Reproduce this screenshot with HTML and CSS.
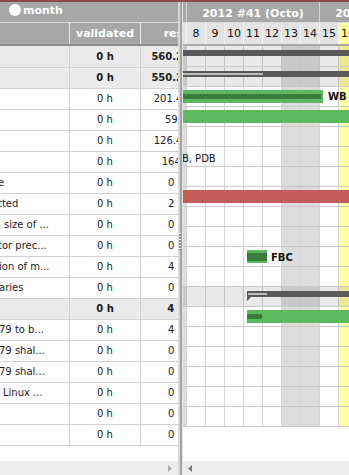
FILE: index.html
```html
<!DOCTYPE html>
<html>
<head>
<meta charset="utf-8">
<link rel="stylesheet" href="styles.css">
</head>
<body>
<div class="app">
  <div class="topline"></div>
  <div class="main">
    <div class="left">
      <div class="hdr1 lh1"><span class="radio"></span><span class="hlabel">month</span></div>
      <div class="hdr2 lh2"><div class="c1"></div><div class="c2">validated</div><div class="c3">rest</div></div>
      <div class="lbody">
        <div class="lrow sum first"><div class="c1"></div><div class="c2">0 h</div><div class="c3">560.25 h</div></div>
        <div class="lrow sum"><div class="c1"></div><div class="c2">0 h</div><div class="c3">550.25 h</div></div>
        <div class="lrow"><div class="c1"></div><div class="c2">0 h</div><div class="c3">201.45 h</div></div>
        <div class="lrow"><div class="c1"></div><div class="c2">0 h</div><div class="c3">59 h</div></div>
        <div class="lrow"><div class="c1"></div><div class="c2">0 h</div><div class="c3">126.45 h</div></div>
        <div class="lrow"><div class="c1"></div><div class="c2">0 h</div><div class="c3">164 h</div></div>
        <div class="lrow"><div class="c1"><span class="nm o-m2">e</span></div><div class="c2">0 h</div><div class="c3">0 h</div></div>
        <div class="lrow"><div class="c1"><span class="nm o-m2">tted</span></div><div class="c2">0 h</div><div class="c3">2 h</div></div>
        <div class="lrow"><div class="c1"><span class="nm o-4">size of ...</span></div><div class="c2">0 h</div><div class="c3">0 h</div></div>
        <div class="lrow"><div class="c1"><span class="nm o-m2">tor prec...</span></div><div class="c2">0 h</div><div class="c3">0 h</div></div>
        <div class="lrow"><div class="c1"><span class="nm o-m1">ion of m...</span></div><div class="c2">0 h</div><div class="c3">4 h</div></div>
        <div class="lrow"><div class="c1"><span class="nm o-m1">aries</span></div><div class="c2">0 h</div><div class="c3">0 h</div></div>
        <div class="lrow sum"><div class="c1"></div><div class="c2">0 h</div><div class="c3">4 h</div></div>
        <div class="lrow"><div class="c1"><span class="nm o-m1">79 to b...</span></div><div class="c2">0 h</div><div class="c3">4 h</div></div>
        <div class="lrow"><div class="c1"><span class="nm o-m1">79 shal...</span></div><div class="c2">0 h</div><div class="c3">0 h</div></div>
        <div class="lrow"><div class="c1"><span class="nm o-m1">79 shal...</span></div><div class="c2">0 h</div><div class="c3">0 h</div></div>
        <div class="lrow"><div class="c1"><span class="nm o-3">Linux ...</span></div><div class="c2">0 h</div><div class="c3">0 h</div></div>
        <div class="lrow"><div class="c1"></div><div class="c2">0 h</div><div class="c3">0 h</div></div>
        <div class="lrow"><div class="c1"></div><div class="c2">0 h</div><div class="c3">0 h</div></div>
      </div>
      <div class="fill"></div>
      <div class="hscroll lscroll"><svg width="4" height="7" viewBox="0 0 4 7"><polygon points="0,0 4,3.5 0,7" fill="#ababab"/></svg></div>
    </div>
    <div class="splitter"><div class="grip"></div></div>
    <div class="right">
      <div class="hdr1 weeks">
        <div class="wk first">2012 #40 (Octo)</div>
        <div class="wk">2012 #41 (Octo)</div>
        <div class="wk">2012 #42 (Octo)</div>
      </div>
      <div class="hdr2 days">
        <div class="dh first">7</div><div class="dh">8</div><div class="dh">9</div><div class="dh">10</div><div class="dh">11</div><div class="dh">12</div><div class="dh">13</div><div class="dh">14</div><div class="dh">15</div><div class="dh today">16</div><div class="dh">17</div>
      </div>
      <div class="gbody">
        <div class="dcols">
          <div class="dc we"></div><div class="dc"></div><div class="dc"></div><div class="dc"></div><div class="dc"></div><div class="dc"></div><div class="dc we"></div><div class="dc we"></div><div class="dc"></div><div class="dc today"></div><div class="dc"></div>
        </div>
        <div class="grow sum first"><div class="sbar full"></div></div>
        <div class="grow sum"><div class="sbar full"><div class="prog p-r2"></div></div></div>
        <div class="grow"><div class="gbar b-wb"><div class="prog p-wb"></div></div><div class="lbl l-wb">WB</div></div>
        <div class="grow"><div class="gbar full"></div></div>
        <div class="grow"></div>
        <div class="grow"><div class="lbl l-pdb">WB, PDB</div></div>
        <div class="grow"></div>
        <div class="grow"><div class="gbar red full"></div></div>
        <div class="grow"></div>
        <div class="grow"></div>
        <div class="grow"><div class="gbar b-fbc"><div class="prog p-fbc"></div></div><div class="lbl l-fbc">FBC</div></div>
        <div class="grow"></div>
        <div class="grow sum"><div class="sbar b-late"><div class="prog p-r13"></div><div class="tri"></div></div></div>
        <div class="grow"><div class="gbar b-late"><div class="prog p-r14"></div></div></div>
        <div class="grow"></div>
        <div class="grow"></div>
        <div class="grow"></div>
        <div class="grow"></div>
        <div class="grow"></div>
      </div>
      <div class="fill"></div>
      <div class="hscroll rscroll"><svg width="4" height="7" viewBox="0 0 4 7"><polygon points="4,0 0,3.5 4,7" fill="#7a7a7a"/></svg></div>
    </div>
  </div>
</div>
</body>
</html>
```

FILE: styles.css
```css
* { box-sizing: border-box; }
html, body { margin: 0; padding: 0; }
body {
  width: 349px;
  height: 475px;
  overflow: hidden;
  background: #fff;
  color: #1c1c1c;
  font-family: "DejaVu Sans", Verdana, sans-serif;
  font-size: 10px;
}
.app { display: flex; flex-direction: column; height: 475px; }
.topline { flex: none; height: 2px; background: #904a4a; }
.main { flex: 1; display: flex; min-height: 0; }
.left { flex: none; width: 178px; display: flex; flex-direction: column; overflow: hidden; }
.splitter {
  flex: none;
  width: 5px;
  position: relative;
  background: linear-gradient(to right, #d9d9d9 0 2px, #a3a3a3 2px 4px, #e6e6e6 4px 5px);
}
.grip {
  position: absolute;
  left: 1px;
  top: 231px;
  width: 2px;
  height: 17px;
  background: repeating-linear-gradient(to bottom, #f6f6f6 0 1px, #8a8a8a 1px 3px);
}
.right { flex: 1; min-width: 0; display: flex; flex-direction: column; overflow: hidden; }
.fill { flex: 1; }

/* headers */
.hdr1 {
  flex: none;
  height: 21px;
  background: #a7a7a7;
  border-bottom: 1px solid #dcdcdc;
  color: #fff;
  font-weight: bold;
  font-size: 11px;
  line-height: 12px;
  white-space: nowrap;
  display: flex;
}
.hdr2 {
  flex: none;
  height: 23px;
  border-bottom: 2px solid #8d8d8d;
  font-size: 11px;
  line-height: 12px;
  white-space: nowrap;
  display: flex;
}
.lh1 { padding: 2px 0 0 9px; }
.radio {
  flex: none;
  width: 12px;
  height: 12px;
  border-radius: 50%;
  background: #fff;
  margin-right: 2px;
}
.hlabel { padding-top: 1px; }
.lh2 { background: #a7a7a7; color: #fff; font-weight: bold; }
.lh2 > div { padding-top: 5px; }
.lh2 .c1, .lh2 .c2 { border-right-color: #ececec; }

/* left grid */
.c1 { flex: none; width: 70px; border-right: 1px solid #d3d3d3; overflow: hidden; white-space: nowrap; }
.c2 { flex: none; width: 71px; border-right: 1px solid #d3d3d3; text-align: center; }
.c3 { flex: none; width: 70px; text-align: center; white-space: nowrap; }
.lbody { flex: none; }
.lrow { display: flex; height: 21px; line-height: 20px; border-bottom: 1px solid #d3d3d3; }
.lrow.first { height: 22px; line-height: 21px; }
.lrow.sum { background: #ebebeb; font-weight: bold; }
.nm { display: inline-block; }
.o-m2 { margin-left: -2px; }
.o-m1 { margin-left: -1px; }
.o-3 { margin-left: 3px; }
.o-4 { margin-left: 4px; }

/* timeline header */
.wk {
  flex: none;
  width: 133px;
  border-right: 1px solid #d4d4d4;
  text-align: center;
  padding-top: 6px;
}
.wk.first { margin-left: -129px; }
.days { background: #e3e3e3; border-bottom-color: #a9a9a9; }
.dh {
  flex: none;
  width: 19px;
  border-right: 1px solid #f3f3f3;
  text-align: center;
  padding-top: 5px;
  color: #111;
}
.dh.first { margin-left: -15px; }
.dh.today { background: #ffffa3; }

/* timeline body */
.gbody { flex: none; position: relative; height: 381px; }
.dcols { position: absolute; top: 0; bottom: 0; left: -15px; display: flex; }
.dc { flex: none; width: 19px; border-right: 1px solid #d5d5d5; }
.dc.we { background: #dcdcdc; }
.dc.today { background: #ffffa3; }
.grow { position: relative; height: 20px; border-bottom: 1px solid #c9c9c9; }
.grow.first { height: 21px; }
.grow.sum { background: rgba(0, 0, 0, 0.085); }

.sbar { position: absolute; top: 4px; height: 6px; background: #595959; }
.sbar .prog { position: absolute; top: 2px; height: 2px; background: #bdbdbd; }
.gbar { position: absolute; top: 3px; height: 13px; background: #5cb85c; }
.gbar .prog { position: absolute; left: 0; top: 4px; height: 5px; background: #3b7b3b; }
.gbar.red { background: #c45b5b; }
.lbl {
  position: absolute;
  top: 0;
  line-height: 19px;
  font-weight: bold;
  white-space: nowrap;
  color: #111;
}
.full { left: -20px; right: -20px; }
.p-r2 { left: 0; width: 100px; }
.b-wb { left: -20px; width: 160px; }
.p-wb { width: 158px; }
.l-wb { left: 145px; }
.l-pdb { left: -11px; top: 2px; font-weight: normal; }
.b-fbc { left: 64px; width: 20px; }
.gbar .p-fbc { top: 3px; height: 8px; width: 20px; }
.l-fbc { left: 88px; top: 1px; }
.b-late { left: 64px; right: -20px; }
.p-r13 { left: 1px; width: 19px; }
.p-r14 { width: 15px; }
.tri {
  position: absolute;
  left: 0;
  top: 6px;
  width: 0;
  height: 0;
  border-top: 4px solid #595959;
  border-right: 4px solid transparent;
}

/* scrollbars */
.hscroll { flex: none; height: 14px; background: #ececec; display: flex; align-items: center; }
.lscroll { justify-content: flex-end; padding-right: 6px; }
.rscroll { padding-left: 5px; }
.hscroll svg { display: block; }
```
